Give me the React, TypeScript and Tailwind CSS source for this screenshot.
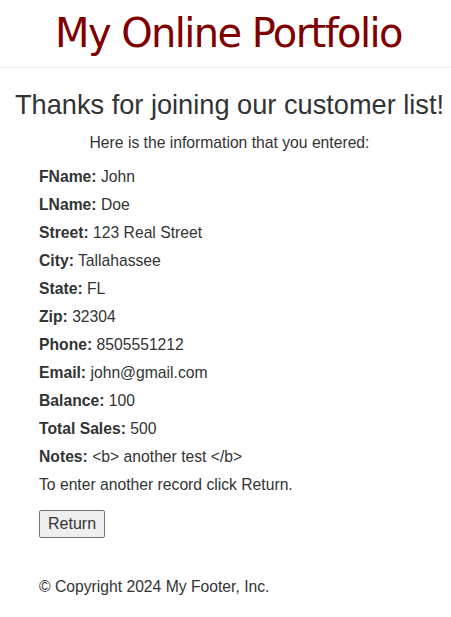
import React from 'react';

const fields: [string, string][] = [
  ['FName', 'John'],
  ['LName', 'Doe'],
  ['Street', '123 Real Street'],
  ['City', 'Tallahassee'],
  ['State', 'FL'],
  ['Zip', '32304'],
  ['Phone', '8505551212'],
  ['Email', 'john@gmail.com'],
  ['Balance', '100'],
  ['Total Sales', '500'],
  ['Notes', '<b> another test </b>'],
];

const App: React.FC = () => {
  return (
    <div className="min-h-screen bg-white text-[#333] font-['Liberation_Sans',Arial,sans-serif] text-[15.7px]">
      <header className="border-b border-[#eee] h-[68px] flex items-center justify-center">
        <h1 className="text-[40px] leading-none text-[#800000] font-['DejaVu_Sans',sans-serif] tracking-[-1.6px] mt-[-1px] ml-[6px]">
          My Online Portfolio
        </h1>
      </header>

      <main className="px-[39px]">
        <h2 className="text-[27.2px] leading-none text-center mt-[23px] -mx-[39px] pl-[8px] whitespace-nowrap">
          Thanks for joining our customer list!
        </h2>
        <p className="text-center mt-[15px] leading-[20px] pl-[8px]">Here is the information that you entered:</p>

        <div className="mt-[10px] flex flex-col">
          {fields.map(([label, value]) => (
            <p key={label} className="leading-[28px]">
              <span className="font-bold">{label}:</span> {value}
            </p>
          ))}
          <p className="leading-[28px]">To enter another record click Return.</p>
        </div>

        <button className="mt-[11px] h-[28px] px-[8px] bg-[#efefef] border border-[#767676] rounded-[2px] text-[16px] leading-none">
          Return
        </button>

        <footer className="mt-[39px] leading-[20px]">© Copyright 2024 My Footer, Inc.</footer>
      </main>
    </div>
  );
};

export default App;
